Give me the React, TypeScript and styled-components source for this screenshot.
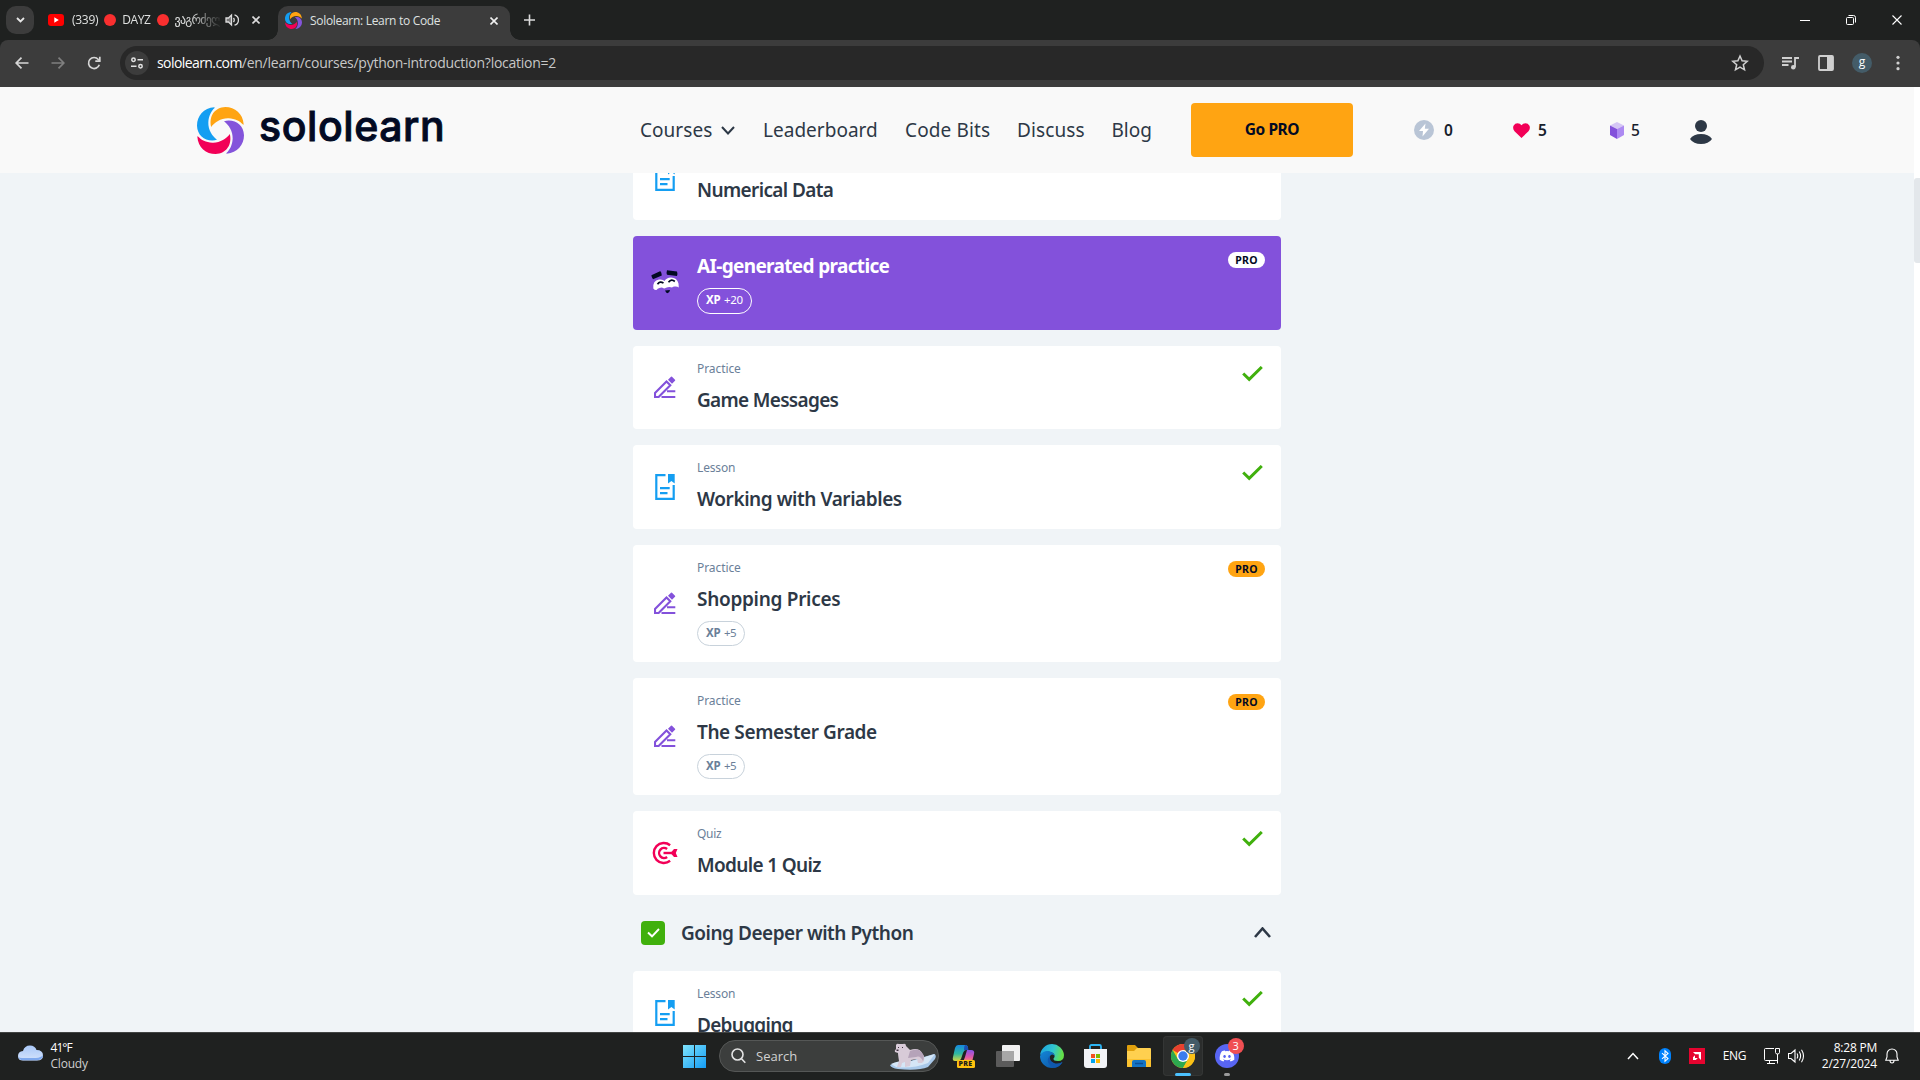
import React, { useLayoutEffect, useRef, useState } from 'react';
import styled, { createGlobalStyle, css } from 'styled-components';
import { FaDiscord } from 'react-icons/fa';

const page = '"Noto Sans", "Open Sans", sans-serif';
const chromeFont = '"Open Sans", "Noto Sans", "DejaVu Sans", sans-serif';

const Global = createGlobalStyle`
  * { box-sizing: border-box; }
  html, body { margin: 0; padding: 0; overflow: hidden; }
  body { font-family: ${page}; background: #f0f4f7; }
  svg { display: block; flex: none; }
`;

/* Text whose tracking is tuned to a target width. */
const FitText = styled.span`
  display: inline-block;
  white-space: pre;
`;

function Fit({ w, children }: { w: number; children: string }) {
  const ref = useRef<HTMLSpanElement>(null);
  const [spacing, setSpacing] = useState<number | null>(null);
  useLayoutEffect(() => {
    if (spacing === null && ref.current) {
      const natural = ref.current.getBoundingClientRect().width;
      setSpacing((w + 0.3 - natural) / children.length);
    }
  }, [spacing, w, children]);
  return (
    <FitText ref={ref} style={{ letterSpacing: spacing ?? 0 }}>
      {children}
    </FitText>
  );
}

const Screen = styled.div`
  width: 1920px;
  height: 1080px;
  display: flex;
  flex-direction: column;
  overflow: hidden;
`;

/* ---------- browser chrome ---------- */

const TabStrip = styled.div`
  height: 40px;
  flex: none;
  background: #1f2120;
  display: flex;
  align-items: flex-start;
  padding: 6px 18px 0 6px;
  font: 12px/28px ${chromeFont};
  color: #dfe1e0;
`;
const TabSearch = styled.div`
  width: 28px;
  height: 28px;
  border-radius: 10px;
  background: #3c3c3c;
  display: grid;
  place-items: center;
  margin-right: 14px;
`;
const BackTab = styled.div`
  width: 230px;
  height: 28px;
  display: flex;
  align-items: center;
`;
const BackTitle = styled.div`
  width: 148px;
  height: 28px;
  margin-left: 8px;
  display: flex;
  align-items: center;
  gap: 6px;
  overflow: hidden;
  white-space: nowrap;
  mask-image: linear-gradient(90deg, #000 118px, transparent 150px);
`;
const RedDot = styled.i`
  width: 12px;
  height: 12px;
  flex: none;
  border-radius: 50%;
  background: #f92f2f;
`;
const Speaker = styled.div`
  margin: 0 13px 0 5px;
`;
const ActiveTab = styled.div`
  width: 232px;
  height: 34px;
  border-radius: 10px 10px 0 0;
  background: #3c3c3c;
  display: flex;
  align-items: center;
  padding: 0 12px 5px 7px;
  position: relative;
  &::before, &::after {
    content: '';
    position: absolute;
    bottom: 0;
    width: 10px;
    height: 10px;
  }
  &::before {
    left: -10px;
    background: radial-gradient(circle at 0 0, transparent 9.5px, #3c3c3c 10px);
  }
  &::after {
    right: -10px;
    background: radial-gradient(circle at 100% 0, transparent 9.5px, #3c3c3c 10px);
  }
`;
const ActiveTitle = styled.span`
  margin-left: 8px;
  flex: 1;
`;
const NewTab = styled.div`
  margin: 8px 0 0 14px;
  flex: 1;
`;
const WindowButtons = styled.div`
  display: flex;
  gap: 36px;
  padding-top: 9px;
`;

const Toolbar = styled.div`
  height: 47px;
  flex: none;
  background: #3c3c3c;
  display: flex;
  align-items: center;
  padding: 0 16px 1px 12px;
  border-radius: 8px 8px 0 0;
`;
const ToolbarBack = styled.div`
  background: #1f2120;
  flex: none;
`;
const NavButtons = styled.div`
  width: 108px;
  display: flex;
  gap: 16px;
`;
const Omnibox = styled.div`
  width: 1644px;
  height: 34px;
  border-radius: 17px;
  background: #282828;
  display: flex;
  align-items: center;
  padding: 0 15px 0 5px;
`;
const SiteChip = styled.div`
  width: 24px;
  height: 24px;
  border-radius: 50%;
  background: #3c3c3c;
  display: grid;
  place-items: center;
`;
const Url = styled.div`
  margin-left: 8px;
  flex: 1;
  font: 14px/20px ${chromeFont};
  color: #c7c7c7;
  white-space: nowrap;
  b { font-weight: 400; color: #fff; }
`;
const ToolbarIcons = styled.div`
  flex: 1;
  display: flex;
  align-items: center;
  gap: 19px;
  padding-left: 18px;
`;
const ProfileDot = styled.div`
  width: 20px;
  height: 20px;
  margin: 0 5px 0 -1px;
  border-radius: 50%;
  background: #445c68;
  color: #fff;
  font: 12px/17px ${chromeFont};
  text-align: center;
`;

/* ---------- site header ---------- */

const SiteArea = styled.div`
  height: 945px;
  flex: none;
  display: flex;
  background: #f0f4f7;
`;
const SiteColumn = styled.div`
  flex: 1;
  display: flex;
  flex-direction: column;
  overflow: hidden;
`;
const Scrollbar = styled.div`
  width: 6px;
  background: #fff;
  padding-top: 91px;
  &::before {
    content: '';
    display: block;
    height: 85px;
    border-radius: 3px 0 0 3px;
    background: #e3e7eb;
  }
`;
const Header = styled.header`
  height: 86px;
  flex: none;
  background: #f9f9f9;
  display: flex;
  align-items: center;
  padding-left: 197px;
`;
const Brand = styled.div`
  width: 443px;
  display: flex;
  align-items: center;
  gap: 15px;
`;
const BrandName = styled.div`
  font: 500 41px/48px Inter, sans-serif;
  color: #020a23;
  -webkit-text-stroke: 0.9px #020a23;
  paint-order: stroke fill;
  margin-top: -8px;
`;
const Nav = styled.nav`
  width: 551px;
  display: flex;
  font: 400 19px/28px ${page};
  color: #2d3846;
`;
const NavItem = styled.div<{ $w: number }>`
  width: ${(p) => p.$w}px;
  flex: none;
  display: flex;
  align-items: center;
  gap: 9px;
`;
const GoPro = styled.div`
  width: 162px;
  height: 54px;
  border-radius: 4px;
  background: #ffa412;
  color: #020a23;
  font: 700 15.5px/53px ${page};
  text-align: center;
  margin-right: 61px;
`;
const Stat = styled.div<{ $w: number; $gap: number; $bold?: boolean }>`
  width: ${(p) => p.$w}px;
  display: flex;
  align-items: center;
  gap: ${(p) => p.$gap}px;
  color: #17202c;
  font: ${(p) => (p.$bold ? 600 : 500)} 15.5px/20px ${page};
`;

/* ---------- course list ---------- */

const Main = styled.main`
  flex: 1;
  overflow: hidden;
`;
const List = styled.div`
  width: 648px;
  margin: -36.8px 0 0 633px;
  display: flex;
  flex-direction: column;
`;
const Card = styled.section<{ $h: number; $ai?: boolean }>`
  height: ${(p) => p.$h}px;
  flex: none;
  margin-bottom: 16px;
  border-radius: 4px;
  background: ${(p) => (p.$ai ? '#8351db' : '#fff')};
  color: ${(p) => (p.$ai ? '#fff' : '#2d3846')};
  display: flex;
  padding-right: 16px;
  &:last-child { margin-bottom: 0; }
`;
const IconSlot = styled.div<{ $lift?: boolean }>`
  width: 64px;
  display: grid;
  place-items: center;
  padding-bottom: ${(p) => (p.$lift ? 2 : 0)}px;
`;
const CardText = styled.div<{ $ai?: boolean }>`
  flex: 1;
  padding-top: ${(p) => (p.$ai ? 16 : 14.8)}px;
`;
const Kind = styled.div`
  height: 16px;
  font: 400 12px/16px ${page};
  color: #6b7f99;
  margin-bottom: 8.95px;
`;
const Title = styled.div<{ $strong?: boolean }>`
  font: ${(p) => (p.$strong ? 700 : 600)} 19px/28px ${page};
`;
const Xp = styled.div<{ $ai?: boolean }>`
  width: fit-content;
  height: ${(p) => (p.$ai ? 26 : 25)}px;
  margin-top: ${(p) => (p.$ai ? 8 : 8.25)}px;
  padding: 0 8px;
  border-radius: 13px;
  border: 1px solid #c8d2db;
  display: flex;
  gap: 3.6px;
  font: 400 11.5px/22px ${page};
  color: #6b7f99;
  b { font-weight: 700; }
  ${(p) => p.$ai && css`border-color: #fff; color: #fff;`}
`;
const Corner = styled.div<{ $pro?: boolean }>`
  padding: ${(p) => (p.$pro ? '16px 0 0' : '20px 2px 0 0')};
`;
const Pro = styled.div<{ $light?: boolean }>`
  width: 37px;
  height: 16px;
  border-radius: 8px;
  background: ${(p) => (p.$light ? '#fff' : '#ffa412')};
  color: #020a23;
  font: 700 10.5px/16px ${page};
  text-align: center;
`;
const ModuleHead = styled.div`
  height: 76.1px;
  flex: none;
  margin-top: -16px;
  padding: 0 10px 0 8px;
  display: flex;
  align-items: center;
  color: #2d3846;
`;
const CheckBox = styled.div`
  width: 24px;
  height: 24px;
  border-radius: 4px;
  background: #40b00d;
  display: grid;
  place-items: center;
  margin-right: 16px;
`;
const ModuleTitle = styled(Title)`
  flex: 1;
`;

/* ---------- taskbar ---------- */

const Taskbar = styled.footer`
  height: 48px;
  flex: none;
  background: #1f2120;
  border-top: 1px solid #424443;
  display: flex;
  align-items: center;
  padding: 0 21px 1px 18px;
  font: 12px/16px ${chromeFont};
  color: #fff;
`;
const Weather = styled.div`
  width: 665px;
  display: flex;
  gap: 7.5px;
  line-height: 16px;
  small { display: block; font-size: 12px; color: #cfcfcf; }
`;
const SearchBox = styled.div`
  width: 220px;
  height: 32px;
  margin: 0 12.6px 0 13px;
  border-radius: 16px;
  border: 1px solid #555756;
  background: #3c3e3d;
  display: flex;
  align-items: center;
  padding: 0 2px 0 11px;
  font: 13px/20px ${chromeFont};
  color: #d2d2d2;
`;
const SearchLabel = styled.span`
  flex: 1;
  margin-left: 10px;
`;
const Apps = styled.div`
  display: flex;
  align-items: center;
  gap: 20px;
`;
const AppTile = styled.div<{ $active?: boolean }>`
  width: 40px;
  height: 40px;
  margin: 0 -8px;
  border-radius: 4px;
  display: flex;
  justify-content: center;
  align-items: center;
  position: relative;
  ${(p) => p.$active && css`background: #2b2d2c; box-shadow: inset 0 0 0 1px #343635;`}
  &::after {
    content: '';
    position: absolute;
    bottom: 0;
    width: ${(p) => (p.$active ? 16 : 6)}px;
    height: 3px;
    border-radius: 2px;
    background: ${(p) => (p.$active ? '#4cc2ff' : '#9a9a9a')};
  }
`;
const AppBadge = styled.span<{ $bg: string }>`
  position: absolute;
  right: 3px;
  top: 2px;
  width: 16px;
  height: 16px;
  border-radius: 50%;
  background: ${(p) => p.$bg};
  font: 11px/15px ${chromeFont};
  text-align: center;
`;
const DiscordDisc = styled.div`
  width: 24px;
  height: 24px;
  border-radius: 50%;
  background: #5865f2;
  display: grid;
  place-items: center;
`;
const Spacer = styled.div`
  flex: 1;
`;
const Tray = styled.div`
  display: flex;
  align-items: center;
`;
const TrayItem = styled.div<{ $ml: number }>`
  margin-left: ${(p) => p.$ml}px;
`;
const Clock = styled.div`
  width: 72px;
  text-align: right;
  margin-right: 8px;
`;

/* ---------- drawings ---------- */

const blade = 'M52 1C20 3 0 27 0 56C1 88 28 106 60 98.500C46 88 33 69 34 46C35 27 43 12 52 4Q54 1 52 1Z';
const Logo = ({ size }: { size: number }) => (
  <svg width={size} height={size} viewBox="0 0 141 141">
    {['#149ef2', '#ffa412', '#8454db', '#f20057'].map((c, i) => (
      <path key={c} d={blade} fill={c} transform={`rotate(${i * 90} 70.5 70.5)`} />
    ))}
  </svg>
);
const Cross = ({ s = 8, w = 1.6, c = '#dcdcdc' }) => (
  <svg width={s} height={s} viewBox={`0 0 ${s} ${s}`}>
    <path d={`M.5.5L${s - 0.5} ${s - 0.5}M${s - 0.5}.5L.5 ${s - 0.5}`} stroke={c} strokeWidth={w} />
  </svg>
);
const Arrow = ({ flip = false, c }: { flip?: boolean; c: string }) => (
  <svg width="20" height="20" viewBox="0 0 20 20" fill="none" stroke={c} strokeWidth="1.7">
    <path d={flip ? 'M3.500 10H16M10.500 4.700L15.800 10L10.500 15.300' : 'M16.500 10H4M9.500 4.700L4.200 10L9.500 15.300'} />
  </svg>
);
const LessonIcon = () => (
  <svg width="20" height="26" viewBox="0 0 20 26" fill="none" stroke="#149ef2" strokeWidth="2.2">
    <path d="M10.500 1.100H1.300V24.800H18.700V11M5 14.100H14.700M5 19.100H12.500" />
    <path d="M13 0H19.700V9.400L16.400 6.900L13 9.400Z" fill="#149ef2" stroke="none" />
  </svg>
);
const PracticeIcon = () => (
  <svg width="22" height="22" viewBox="0 0 22 22" fill="none" stroke="#8351db" strokeWidth="2.1">
    <path d="M1 21V17L12.500 5.400L16.300 9.200L4.600 21Z M13 15.200H21.300M7.500 21H21.300" />
    <path d="M14 3.800L17 .8Q17.500.4 18 .8L21 3.800Q21.500 4.300 21 4.800L18 7.800Z" fill="#8351db" stroke="none" />
  </svg>
);
const QuizIcon = () => (
  <svg width="26" height="24" viewBox="0 0 26 24" fill="none" stroke="#f20057" strokeWidth="2.4">
    <path d="M18.100 4.200A10 10 0 1 0 18.100 19.800" />
    <path d="M15.100 8A5 5 0 1 0 15.100 16" />
    <path d="M11.500 12H20" />
    <path d="M18.500 12L22 8H25.500L23.800 12L25.500 16H22Z" fill="#f20057" stroke="none" />
  </svg>
);
const FaceIcon = () => (
  <svg width="29" height="24" viewBox="0 0 29 24">
    <path d="M2.300 18.500Q1.500 10.500 8 9.500Q12 9 13.500 11Q15.500 7.500 20 7.500Q26 7.500 27.500 13.500L27.800 17.500Q26 16 23.500 16.500Q22 16.700 21 17.500Q18 16.500 15 17.800Q13.500 18.700 12.500 18.300Q11 17 8.500 18Q6.500 18.500 5.500 20Q4 20.500 2.300 18.500Z" fill="#fff" />
    <path d="M.4 5.200L9 1.200Q10.300 1 10.800 5.500L2 9.200Q.5 7.500.4 5.200ZM16 .2L26 1.500Q26.800 3.500 26 6L16 4.800Q15.200 2.500 16 .2Z" fill="#020a23" />
    <path d="M6.500 14.200Q9 10.500 12.500 13.200M17.500 12.200Q20.500 8.500 23.800 11.500" fill="none" stroke="#020a23" strokeWidth="1.700" />
    <path d="M14 20.500L19 20Q18.500 23 16.500 23.200Q15 23 14 20.500Z" fill="#020a23" />
  </svg>
);
const Check = () => (
  <svg width="21" height="16" viewBox="0 0 21 16" fill="none" stroke="#40b00d" strokeWidth="3">
    <path d="M1.200 7.500L7.200 13.300L19.800 1" />
  </svg>
);
const Chevron = ({ w, h, sw, up, c }: { w: number; h: number; sw: number; up?: boolean; c: string }) => (
  <svg width={w} height={h} viewBox={`0 0 ${w} ${h}`} fill="none" stroke={c} strokeWidth={sw}>
    <path d={up ? `M1 ${h - 1}L${w / 2} 1.500L${w - 1} ${h - 1}` : `M1 1L${w / 2} ${h - 1.5}L${w - 1} 1`} />
  </svg>
);

const Bear = () => (
  <svg width="46" height="27" viewBox="0 0 46 27">
    <path d="M0 22Q8 18 20 18L44 11Q47 12 45 16L38 24Q28 28 8 26Q1 25 0 22Z" fill="#a9c9ea" />
    <path d="M1 21Q10 17 22 18L45 11L38 20Q22 26 6 24Z" fill="#d5e6f6" />
    <path d="M6 2Q7 0 9 1H13Q16 0 16 3Q18 5 20 7Q29 4 32 10Q35 13 34 18L32 20H28L27 16L21 17L20 23L15 24L15 19L12 20L11 24H7L9 18Q8 12 8 10L5 9Q4 8 6 6Z" fill="#d8cbd8" />
    <path d="M20 8Q29 4 32 10Q35 13 33 18Q30 12 26 14L18 15Z" fill="#b5a3b9" />
    <path d="M6.500 6.500h2v1.500h-2zM8 4h1v1H8zM12 4h1v1h-1z" fill="#413342" />
  </svg>
);
const WindowsLogo = () => (
  <svg width="23" height="23" viewBox="0 0 23 23">
    <defs><linearGradient id="win" x1="0" y1="0" x2="1" y2="1"><stop stopColor="#7fe3fb" /><stop offset="1" stopColor="#139cf5" /></linearGradient></defs>
    <path d="M0 0H11V11H0ZM12 0H23V11H12ZM0 12H11V23H0ZM12 12H23V23H12Z" fill="url(#win)" />
  </svg>
);
const PreLabel = styled.span`
  position: absolute;
  left: 5px;
  top: 16px;
  padding: 0 2px;
  border-radius: 1.5px;
  background: #ffc20e;
  color: #1b1b1b;
  font: 800 7px/7.5px ${chromeFont};
  letter-spacing: 0.3px;
`;
const CopilotBox = styled.div`
  position: relative;
  width: 24px;
  height: 24px;
`;
const Copilot = () => (
  <CopilotBox>
    <svg width="24" height="24" viewBox="0 0 24 24">
      <defs>
        <linearGradient id="co1" x1="0" y1="0" x2="0" y2="1"><stop stopColor="#1689e0" /><stop offset=".55" stopColor="#2fb8a0" /><stop offset="1" stopColor="#d6d640" /></linearGradient>
        <linearGradient id="co2" x1="0" y1="0" x2="0" y2="1"><stop stopColor="#8754e8" /><stop offset=".6" stopColor="#e058a8" /><stop offset="1" stopColor="#ff9a55" /></linearGradient>
      </defs>
      <path d="M6 1H13Q16 1 16 4L14 6Q12 6 11 9L9 15Q8 17 5 17H3Q0 17 1 13L3 4Q4 1 6 1Z" fill="url(#co1)" />
      <path d="M13 1Q16 1 16.500 6H12Q12 2 13 1Z" fill="#1a4fb4" />
      <path d="M15 6H19Q23 6 22 10L20 18H10Q12 17 13 13Z" fill="url(#co2)" />
    </svg>
    <PreLabel>PRE</PreLabel>
  </CopilotBox>
);
const TaskView = () => (
  <svg width="24" height="22" viewBox="0 0 24 22">
    <rect x="6" y="0" width="18" height="16" rx="1" fill="#f1f1f1" />
    <rect x="0" y="6" width="18" height="16" rx="1" fill="#5b5b5b" />
    <rect x="6" y="6" width="12" height="10" fill="#a7a7a7" />
  </svg>
);
const Edge = () => (
  <svg width="24" height="24" viewBox="0 0 24 24">
    <defs>
      <linearGradient id="ed" x1="0" y1="0" x2="1" y2=".2"><stop stopColor="#1aa0e0" /><stop offset=".6" stopColor="#31c6d0" /><stop offset="1" stopColor="#64e04a" /></linearGradient>
      <linearGradient id="ed2" x1="0" y1="0" x2="1" y2="1"><stop stopColor="#1387d8" /><stop offset="1" stopColor="#0d4f9e" /></linearGradient>
    </defs>
    <path d="M.1 11A12 12 0 0 1 24 11Q24 17 18 17Q13 17 13.500 14.500Q16 12 13 9Q7 5 .1 11Z" fill="url(#ed)" />
    <path d="M0 12Q2 7 8 7Q14 8 15 12Q12 9 10 12Q8 17 14 19.500Q18 21 22.500 18Q19 24 12 24A12 12 0 0 1 0 12Z" fill="url(#ed2)" />
    <path d="M10 12Q6 15 9 20Q11 23 14 23.800Q20 23 22.500 18Q18 20.500 14 19Q9 17 10 12Z" fill="#1058ae" />
  </svg>
);
const Store = () => (
  <svg width="23" height="24" viewBox="0 0 23 24">
    <path d="M6 6V2.500Q6 1 7.500 1H15.500Q17 1 17 2.500V6" fill="none" stroke="#2cb5f5" strokeWidth="1.800" />
    <path d="M0 5H23V21Q23 24 20 24H3Q0 24 0 21Z" fill="#f1f3f6" />
    <path d="M7 10H11V14H7Z" fill="#f25022" /><path d="M12 10H16V14H12Z" fill="#7fba00" />
    <path d="M7 15H11V19H7Z" fill="#00a4ef" /><path d="M12 15H16V19H12Z" fill="#ffb900" />
  </svg>
);
const Folder = () => (
  <svg width="24" height="22" viewBox="0 0 24 22">
    <path d="M0 1Q0 0 1 0H8L11 3V8H0Z" fill="#e0a00c" />
    <path d="M0 6H7L10 3H23Q24 3 24 4V21Q24 22 23 22H1Q0 22 0 21Z" fill="#ffd04f" />
    <path d="M0 14H24V21Q24 22 23 22H1Q0 22 0 21Z" fill="#fbc22f" />
    <path d="M5 22V17Q5 15 7 15H17Q19 15 19 17V22Z" fill="#1474c4" /><path d="M8 18.500H16" stroke="#0c4f94" strokeWidth="1.500" />
  </svg>
);
const ChromeLogo = () => (
  <svg width="24" height="24" viewBox="0 0 24 24">
    <circle cx="12" cy="12" r="12" fill="#fbc116" />
    <path d="M12 12L1.600 6A12 12 0 0 1 22.400 6H12Z" fill="#e8402f" />
    <path d="M1.600 6A12 12 0 0 0 12 24L17.200 15L12 12L6.800 15Z" fill="#2da94f" />
    <path d="M12 6H22.400A12 12 0 0 1 12 24L17.200 15Z" fill="#fbc116" />
    <circle cx="12" cy="12" r="6" fill="#fff" /><circle cx="12" cy="12" r="4.700" fill="#3b7ded" />
  </svg>
);

/* ---------- data ---------- */

type Kinds = 'Lesson' | 'Practice' | 'Quiz';
type Row = { kind: Kinds; title: string; w: number; xp?: boolean };

const kindWidth: Record<Kinds, number> = { Lesson: 38, Practice: 43.5, Quiz: 24 };
const kindIcon: Record<Kinds, React.ReactNode> = {
  Lesson: <LessonIcon />,
  Practice: <PracticeIcon />,
  Quiz: <QuizIcon />,
};
const rows: Row[] = [
  { kind: 'Practice', title: 'Game Messages', w: 141 },
  { kind: 'Lesson', title: 'Working with Variables', w: 204.5 },
  { kind: 'Practice', title: 'Shopping Prices', w: 143 },
  { kind: 'Practice', title: 'The Semester Grade', w: 179.5 },
  { kind: 'Quiz', title: 'Module 1 Quiz', w: 123.5 },
].map((r, i) => ({ ...r, xp: i === 2 || i === 3 })) as Row[];

const CourseCard = ({ kind, title, w, xp, bare }: Row & { bare?: boolean }) => (
  <Card $h={xp ? 117.1 : 83.6}>
    <IconSlot $lift={kind === 'Practice'}>{kindIcon[kind]}</IconSlot>
    <CardText>
      <Kind>{!bare && <Fit w={kindWidth[kind]}>{kind}</Fit>}</Kind>
      <Title><Fit w={w}>{title}</Fit></Title>
      {xp && <Xp><b><Fit w={14}>XP</Fit></b><Fit w={12}>+5</Fit></Xp>}
    </CardText>
    {!bare && <Corner $pro={xp}>{xp ? <Pro><Fit w={22}>PRO</Fit></Pro> : <Check />}</Corner>}
  </Card>
);

export default function App() {
  return (
    <Screen>
      <Global />
      <TabStrip>
        <TabSearch><Chevron w={9} h={6} sw={1.8} c="#e6e6e6" /></TabSearch>
        <BackTab>
          <svg width="16" height="12" viewBox="0 0 16 12"><rect width="16" height="12" rx="3" fill="#f00" /><path d="M6.300 3.200L10.800 6L6.300 8.800Z" fill="#fff" /></svg>
          <BackTitle>
            <Fit w={26}>(339)</Fit><RedDot /><Fit w={28}>DAYZ</Fit><RedDot /><Fit w={48}>ვაგრძელ</Fit>
          </BackTitle>
          <Speaker>
            <svg width="14" height="14" viewBox="0 0 14 14" fill="none" stroke="#dcdcdc" strokeWidth="1.300">
              <path d="M1 5H3.500L6.500 2V12L3.500 9H1Z" fill="#777" /><path d="M8.500 5Q10 7 8.500 9M9.500 1.800A5.400 5.400 0 0 1 9.500 12.200" />
            </svg>
          </Speaker>
          <Cross />
        </BackTab>
        <ActiveTab>
          <Logo size={17} />
          <ActiveTitle><Fit w={130}>Sololearn: Learn to Code</Fit></ActiveTitle>
          <Cross c="#f0f0f0" />
        </ActiveTab>
        <NewTab>
          <svg width="11" height="12" viewBox="0 0 11 12"><path d="M0 6H11M5.500 .5V11.500" stroke="#dcdcdc" strokeWidth="1.600" /></svg>
        </NewTab>
        <WindowButtons>
          <svg width="10" height="10" viewBox="0 0 10 10"><path d="M0 5.500H10" stroke="#fff" /></svg>
          <svg width="10" height="10" viewBox="0 0 10 10" fill="none" stroke="#fff"><rect x=".5" y="2.500" width="7" height="7" rx="1" /><path d="M2.500 .5H7.500Q9.500.5 9.500 2.500V7.500" /></svg>
          <Cross s={10} w={1.1} c="#fff" />
        </WindowButtons>
      </TabStrip>
      <ToolbarBack>
        <Toolbar>
          <NavButtons>
            <Arrow c="#d6d6d6" />
            <Arrow flip c="#7f7f7f" />
            <svg width="20" height="20" viewBox="0 0 20 20" fill="none" stroke="#d6d6d6" strokeWidth="1.700">
              <path d="M15.300 11.700A5.500 5.500 0 1 1 14.300 6.500L15.800 8" /><path d="M15.800 3.700V8.200H11.300" />
            </svg>
          </NavButtons>
          <Omnibox>
            <SiteChip>
              <svg width="14" height="12" viewBox="0 0 14 12" fill="none" stroke="#e3e3e3" strokeWidth="1.500">
                <circle cx="3.500" cy="2.700" r="1.700" /><path d="M7.500 2.700H13M1 9.200H6.500" /><circle cx="10.500" cy="9.200" r="1.700" />
              </svg>
            </SiteChip>
            <Url><b><Fit w={84.5}>sololearn.com</Fit></b><Fit w={314}>/en/learn/courses/python-introduction?location=2</Fit></Url>
            <svg width="18" height="18" viewBox="0 0 18 18" fill="none" stroke="#d0d0d0" strokeWidth="1.500"><path d="M9 2L11.100 6.800L16.200 7.300L12.300 10.800L13.500 15.800L9 13.100L4.500 15.800L5.700 10.800L1.800 7.300L6.900 6.800Z" /></svg>
          </Omnibox>
          <ToolbarIcons>
            <svg width="17" height="15" viewBox="0 0 17 15" fill="none" stroke="#d0d0d0" strokeWidth="1.800"><path d="M0 2H10M0 5.500H10M0 9H6.500M13 11V2H17" /><circle cx="11.300" cy="11.200" r="2.300" fill="#d0d0d0" stroke="none" /></svg>
            <svg width="16" height="16" viewBox="0 0 16 16"><rect x="1" y="1" width="14" height="14" rx="1" fill="none" stroke="#d0d0d0" strokeWidth="1.800" /><path d="M9 1H15V15H9Z" fill="#d0d0d0" /></svg>
            <ProfileDot>g</ProfileDot>
            <svg width="4" height="16" viewBox="0 0 4 16" fill="#d0d0d0"><circle cx="2" cy="2.300" r="1.600" /><circle cx="2" cy="8" r="1.600" /><circle cx="2" cy="13.700" r="1.600" /></svg>
          </ToolbarIcons>
        </Toolbar>
      </ToolbarBack>

      <SiteArea>
        <SiteColumn>
          <Header>
            <Brand>
              <Logo size={47} />
              <BrandName><Fit w={186}>sololearn</Fit></BrandName>
            </Brand>
            <Nav>
              <NavItem $w={123}><Fit w={72}>Courses</Fit><Chevron w={14} h={9} sw={2} c="#2d3846" /></NavItem>
              <NavItem $w={142}><Fit w={114.5}>Leaderboard</Fit></NavItem>
              <NavItem $w={112}><Fit w={85}>Code Bits</Fit></NavItem>
              <NavItem $w={94.5}><Fit w={67.5}>Discuss</Fit></NavItem>
              <NavItem $w={79}><Fit w={40}>Blog</Fit></NavItem>
            </Nav>
            <GoPro><Fit w={54}>Go PRO</Fit></GoPro>
            <Stat $w={99} $gap={10} $bold>
              <svg width="20" height="20" viewBox="0 0 20 20"><circle cx="10" cy="10" r="10" fill="#b9c5d6" /><path d="M11.500 3.500L5 11H9L8.500 16.500L15 8.800H10.800Z" fill="#fff" /></svg>
              <span>0</span>
            </Stat>
            <Stat $w={97} $gap={8} $bold>
              <svg width="17" height="15" viewBox="0 0 17 15"><path d="M8.500 15L1.500 8.200Q-.8 5.300.7 2.500Q2 .2 4.500.2Q7 .2 8.500 2.200Q10 .2 12.500.2Q15 .2 16.300 2.500Q17.800 5.300 15.500 8.200Z" fill="#f20057" /></svg>
              <span>5</span>
            </Stat>
            <Stat $w={80} $gap={7}>
              <svg width="14" height="17" viewBox="0 0 14 17"><path d="M7 0L14 3.500L7 7L0 3.500Z" fill="#d5c6f5" /><path d="M0 3.500L7 7V17L0 13Z" fill="#8351db" /><path d="M14 3.500L7 7V17L14 13Z" fill="#ad8af2" /></svg>
              <span>5</span>
            </Stat>
            <svg width="22" height="28" viewBox="0 -4 22 28" fill="#2d3846"><circle cx="11" cy="6" r="6" /><path d="M0 19Q3.500 14 11 14Q18.500 14 22 19Q18.500 24 11 24Q3.500 24 0 19Z" /></svg>
          </Header>
          <Main>
            <List>
              <CourseCard kind="Lesson" title="Numerical Data" w={136} bare />
              <Card $h={94} $ai>
                <IconSlot $lift><FaceIcon /></IconSlot>
                <CardText $ai>
                  <Title $strong><Fit w={192}>AI-generated practice</Fit></Title>
                  <Xp $ai><b><Fit w={14}>XP</Fit></b><Fit w={18.5}>+20</Fit></Xp>
                </CardText>
                <Corner $pro><Pro $light><Fit w={22}>PRO</Fit></Pro></Corner>
              </Card>
              {rows.map((r) => <CourseCard key={r.title} {...r} />)}
              <ModuleHead>
                <CheckBox>
                  <svg width="13" height="10" viewBox="0 0 13 10" fill="none" stroke="#fff" strokeWidth="1.900"><path d="M1 4.500L5 8.300L12 1" /></svg>
                </CheckBox>
                <ModuleTitle><Fit w={232}>Going Deeper with Python</Fit></ModuleTitle>
                <Chevron w={17} h={11} sw={2.6} up c="#2d3846" />
              </ModuleHead>
              <CourseCard kind="Lesson" title="Debugging" w={95.5} />
            </List>
          </Main>
        </SiteColumn>
        <Scrollbar />
      </SiteArea>

      <Taskbar>
        <Weather>
          <svg width="25" height="26" viewBox="0 -5 25 26">
            <defs><linearGradient id="cl" x1="0" y1="0" x2="0" y2="1"><stop stopColor="#a9c8f8" /><stop offset="1" stopColor="#d3e2fb" /></linearGradient></defs>
            <path d="M5 15.500Q0 15.500 0 11Q0 6.500 5 6Q6.500.5 12 .5Q17 .5 18.500 5Q25 5 25 10.500Q25 15.500 19 15.500Z" fill="url(#cl)" />
            <path d="M5 15.200H19Q25 15 25 10Q23 12.500 18 13H4Q1 13 .2 11.500Q1 15 5 15.200Z" fill="#7fa9ee" />
          </svg>
          <div><Fit w={21}>41°F</Fit><small><Fit w={37}>Cloudy</Fit></small></div>
        </Weather>
        <WindowsLogo />
        <SearchBox>
          <svg width="15" height="16" viewBox="0 0 15 16" fill="none" stroke="#e3e3e3" strokeWidth="1.600"><circle cx="6.500" cy="6.500" r="5.500" /><path d="M10.500 10.700L14.300 14.800" /></svg>
          <SearchLabel><Fit w={41}>Search</Fit></SearchLabel>
          <Bear />
        </SearchBox>
        <Apps>
          <Copilot />
          <TaskView />
          <Edge />
          <Store />
          <Folder />
          <AppTile $active><ChromeLogo /><AppBadge $bg="#445c68">g</AppBadge></AppTile>
          <AppTile><DiscordDisc><FaDiscord size={16} /></DiscordDisc><AppBadge $bg="#f04f53">3</AppBadge></AppTile>
        </Apps>
        <Spacer />
        <Tray>
          <Chevron w={12} h={8} sw={1.5} up c="#fff" />
          <TrayItem $ml={20}>
            <svg width="12" height="16" viewBox="0 0 12 16"><rect width="12" height="16" rx="6" fill="#0082fc" /><path d="M3 5.200L9 10.600L6 13.200V2.800L9 5.400L3 10.800" fill="none" stroke="#fff" strokeWidth="1.100" /></svg>
          </TrayItem>
          <TrayItem $ml={18}>
            <svg width="16" height="16" viewBox="0 0 16 16"><rect width="16" height="16" fill="#e6042f" /><path d="M4 4H12V12L9.800 9.800V6.200H6.200ZM6 7.200V10H8.800L6.800 12H4V9.200Z" fill="#fff" /></svg>
          </TrayItem>
          <TrayItem $ml={18}><Fit w={23}>ENG</Fit></TrayItem>
          <TrayItem $ml={18}>
            <svg width="16" height="16" viewBox="0 0 16 16" fill="none" stroke="#fff"><path d="M10 .5H1.500Q.5.500.5 1.500V11.500Q.5 12.500 1.500 12.500H13.500V7M5.500 12.500V15M3 15.500H11" /><path d="M11.500 .5H15.500V4.500Q15.500 6 13.500 6Q11.500 6 11.500 4.500ZM13.500 6V15.500" /></svg>
          </TrayItem>
          <TrayItem $ml={8}>
            <svg width="17" height="16" viewBox="0 0 17 16" fill="none" stroke="#fff" strokeWidth="1.100"><path d="M.5 5.500H3L7 2V14L3 10.500H.5ZM9 5.500Q10.500 8 9 10.500M11.200 3.500Q14 8 11.200 12.500M13.500 1.800Q17.500 8 13.500 14.200" /></svg>
          </TrayItem>
          <Clock><Fit w={43}>8:28 PM</Fit><br /><Fit w={55}>2/27/2024</Fit></Clock>
          <svg width="14" height="16" viewBox="0 0 14 16" fill="none" stroke="#fff" strokeWidth="1.100"><path d="M.8 12.200H13.200L12 9V6A5 5 0 0 0 2 6V9ZM5 12.500Q5 15 7 15Q9 15 9 12.500" /></svg>
        </Tray>
      </Taskbar>
    </Screen>
  );
}
